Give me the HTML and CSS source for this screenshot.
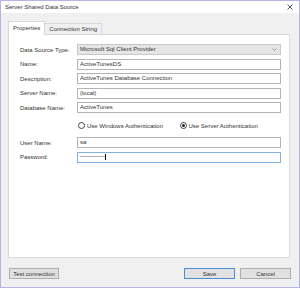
FILE: index.html
```html
<!DOCTYPE html>
<html lang="en">
<head>
    <meta charset="utf-8">
    <title>Server Shared Data Source</title>
    <link rel="stylesheet" href="styles.css">
</head>

<body>
    <div class="window">
        <!-- Title bar -->
        <div class="titlebar">
            <span class="title">Server Shared Data Source</span>
            <svg class="close" width="6" height="6" viewBox="0 0 6 6">
                <path d="M0.5 0.5 L5.5 5.5 M5.5 0.5 L0.5 5.5" stroke="#333" stroke-width="0.8" fill="none" />
            </svg>
        </div>

        <div class="content">
            <!-- Tabs -->
            <div class="tabs">
                <div class="tab active">Properties</div>
                <div class="tab">Connection String</div>
            </div>

            <div class="panel">
                <div class="row">
                    <label class="label">Data Source Type:</label>
                    <div class="field select">
                        <span>Microsoft Sql Client Provider</span>
                        <svg width="5" height="3" viewBox="0 0 5 3">
                            <path d="M0.5 0.5 L2.5 2.5 L4.5 0.5" stroke="#777" stroke-width="0.7" fill="none" />
                        </svg>
                    </div>
                </div>
                <div class="row">
                    <label class="label">Name:</label>
                    <div class="field">ActiveTunesDS</div>
                </div>
                <div class="row">
                    <label class="label">Description:</label>
                    <div class="field">ActiveTunes Database Connection</div>
                </div>
                <div class="row">
                    <label class="label">Server Name:</label>
                    <div class="field">(local)</div>
                </div>
                <div class="row">
                    <label class="label">Database Name:</label>
                    <div class="field">ActiveTunes</div>
                </div>

                <div class="radio-row">
                    <div class="radio-item">
                        <span class="radio"></span>
                        <span>Use Windows Authentication</span>
                    </div>
                    <div class="radio-item">
                        <span class="radio checked"></span>
                        <span>Use Server Authentication</span>
                    </div>
                </div>

                <div class="row user-row">
                    <label class="label">User Name:</label>
                    <div class="field">sa</div>
                </div>
                <div class="row">
                    <label class="label">Password:</label>
                    <div class="field focused"><span class="dots">&bull;&bull;&bull;&bull;&bull;&bull;&bull;&bull;&bull;&bull;&bull;&bull;&bull;&bull;&bull;&bull;&bull;&bull;&bull;&bull;</span><span class="caret"></span></div>
                </div>
            </div>

            <!-- Footer buttons -->
            <div class="buttons">
                <button class="btn test-btn">Test connection</button>
                <div class="spacer"></div>
                <button class="btn default">Save</button>
                <button class="btn">Cancel</button>
            </div>
        </div>
    </div>
</body>
</html>
```

FILE: styles.css
```css
body {
    margin: 0;
    padding: 0;
    font-family: "Liberation Sans", Arial, sans-serif;
    font-size: 6px;
    color: #333;
    background: #fff;
}

.window {
    width: 300px;
    height: 288px;
    box-sizing: border-box;
    border: 1px solid #b4b4e6;
    background: #f0f0f0;
    display: flex;
    flex-direction: column;
}

/* Title bar */
.titlebar {
    height: 12px;
    background: #fff;
    display: flex;
    align-items: center;
    padding: 0 6px 0 4px;
}

.title {
    flex-grow: 1;
    color: #333;
}

.close {
    display: block;
}

/* Content */
.content {
    padding: 8px 9px 0 7px;
    display: flex;
    flex-direction: column;
}

.tabs {
    display: flex;
    align-items: flex-end;
    height: 13px;
}

.tab {
    height: 10px;
    line-height: 10px;
    padding: 0 4px;
    border: 1px solid #d9d9d9;
    border-bottom: none;
    background: #f0f0f0;
    margin-left: -1px;
}

.tab.active {
    height: 13px;
    line-height: 13px;
    background: #fff;
    margin-left: 0;
    position: relative;
    z-index: 1;
    margin-bottom: -1px;
    padding: 0 4px;
}

.panel {
    height: 224px;
    box-sizing: border-box;
    background: #fff;
    border: 1px solid #d9d9d9;
    padding: 9px 8px 0 11px;
    display: flex;
    flex-direction: column;
    gap: 3.5px;
}

.row {
    display: flex;
    align-items: center;
    height: 11px;
}

.label {
    width: 57px;
    flex-shrink: 0;
}

.field {
    flex-grow: 1;
    height: 11px;
    box-sizing: border-box;
    border: 1px solid #b4b4b4;
    background: #fff;
    line-height: 9px;
    padding: 0 2px;
    display: flex;
    align-items: center;
    white-space: nowrap;
    overflow: hidden;
}

.field.select {
    background: #e5e5e5;
    border-color: #c8c8c8;
    justify-content: space-between;
    padding-right: 3px;
}

.field.focused {
    border-color: #7fb3e6;
}

.dots {
    font-size: 3px;
    letter-spacing: 0.2px;
}

.caret {
    width: 1px;
    height: 6px;
    background: #000;
}

.radio-row {
    display: flex;
    align-items: center;
    height: 10px;
    margin: 4px 0 3px 58px;
}

.radio-item {
    display: flex;
    align-items: center;
    gap: 2px;
    width: 106px;
}

.radio {
    width: 5px;
    height: 5px;
    border: 0.8px solid #444;
    border-radius: 50%;
    display: flex;
    align-items: center;
    justify-content: center;
}

.radio.checked::after {
    content: "";
    width: 3px;
    height: 3px;
    border-radius: 50%;
    background: #222;
}

/* Footer buttons */
.buttons {
    display: flex;
    margin-top: 10px;
    margin-right: -1px;
    padding-left: 1px;
}

.spacer {
    flex-grow: 1;
}

.btn {
    height: 11px;
    width: 51px;
    padding: 0;
    font-family: inherit;
    font-size: 6px;
    color: #333;
    background: #e1e1e1;
    border: 1px solid #adadad;
    margin-left: 5px;
}

.test-btn {
    width: 50px;
    margin-left: 0;
}

.btn.default {
    border-color: #4a8fd6;
}
```
